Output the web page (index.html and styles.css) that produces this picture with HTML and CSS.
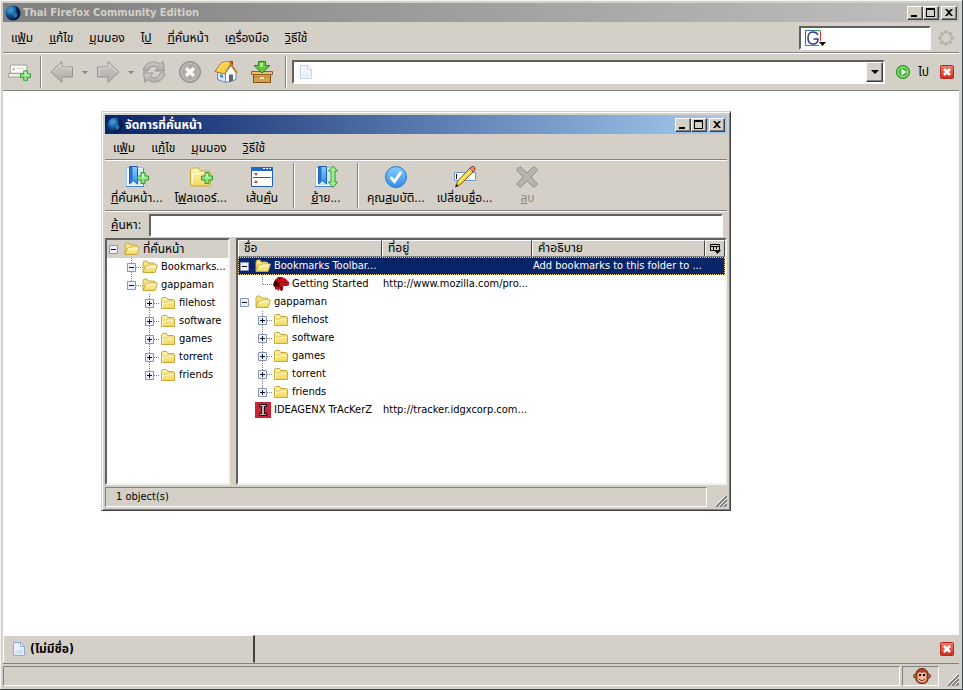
FILE: index.html
```html
<!DOCTYPE html>
<html lang="th">
<head>
  <meta charset="utf-8">
  <title>Thai Firefox Community Edition</title>
  <link rel="stylesheet" href="styles.css">
</head>

<body>
  <!-- shared icons -->
  <svg class="sprite" aria-hidden="true">
    <defs>
      <linearGradient id="g-folder" x1="0" y1="0" x2="0" y2="1"><stop offset="0" stop-color="#fdf6b8"/><stop offset="1" stop-color="#f1d95c"/></linearGradient>
      <linearGradient id="g-blue" x1="0" y1="0" x2="0" y2="1"><stop offset="0" stop-color="#8ccbfa"/><stop offset="1" stop-color="#2f8ee8"/></linearGradient>
      <linearGradient id="g-red" x1="0" y1="0" x2="0" y2="1"><stop offset="0" stop-color="#f08070"/><stop offset="1" stop-color="#cc2a20"/></linearGradient>
      <linearGradient id="g-gray" x1="0" y1="0" x2="0" y2="1"><stop offset="0" stop-color="#cfccc6"/><stop offset="1" stop-color="#aeaba6"/></linearGradient>
      <radialGradient id="g-globe" cx=".35" cy=".3" r=".7"><stop offset="0" stop-color="#58a8dc"/><stop offset=".5" stop-color="#135a9c"/><stop offset="1" stop-color="#04143c"/></radialGradient>

      <symbol id="globe" viewBox="0 0 16 16"><circle cx="8" cy="8" r="7.5" fill="url(#g-globe)"/><path d="M3 4l3-2 2 1-2 2 1 2-3 1-2-1zM8 9l3-1 2 2-2 3-2-1z" fill="#2f8fcf" opacity=".7"/><path d="M10 1c4 1 6 5 5 9-1 3-3 5-6 5 3-2 4-4 3-7s-1-5-2-7z" fill="#020a28" opacity=".6"/></symbol>
      <symbol id="min" viewBox="0 0 12 10"><path d="M2 7h6v2H2z"/></symbol>
      <symbol id="max" viewBox="0 0 12 10"><path d="M1 0h9v9H1zM2 2v6h7V2z" fill-rule="evenodd"/></symbol>
      <symbol id="close" viewBox="0 0 12 10"><path d="M2 1h2l2 2 2-2h2L7 4.500 10 8H8L6 6 4 8H2l3-3.500z"/></symbol>

      <symbol id="folder" viewBox="0 0 16 16"><path d="M1.500 13.500V4l1-1.500h4l1 2h6l1 1v8z" fill="url(#g-folder)" stroke="#c8a83a"/><path d="M2.500 12.500V8h4l1-1h6" fill="none" stroke="#fffde0"/><path d="M3 7h4l1-1h6" fill="none" stroke="#e0c862"/></symbol>
      <symbol id="folder-open" viewBox="0 0 16 16"><path d="M1 13V4l1-2h3l1 2h6l1 1v2" fill="#f7e58a" stroke="#c8a83a"/><path d="M1 13.500l2.500-6.500h3l1-1h8l-2.500 7.500z" fill="url(#g-folder)" stroke="#c8a83a"/><path d="M4 8h3l1-1h6" fill="none" stroke="#fffde0"/></symbol>
      <symbol id="page" viewBox="0 0 12 14"><path d="M.5.5h7l4 4v9H.5z" fill="#e8f1fd" stroke="#8faad4"/><path d="M7.500.5v4h4z" fill="#fff" stroke="#8faad4"/><path d="M2 12V9l8-2v5z" fill="#cfe0f8"/></symbol>
      <symbol id="dino" viewBox="0 0 16 16"><path d="M1 7l1-3 3-3h4l4 2 3 3v3l-2 1h-3l-1 1v3l-2 1-1-2-2 2-1-2-2 1v-3l-2-1z" fill="#c8101c"/><path d="M1 6l2-3v3l2-2v3l3-2-2 4 2 1-3 1-2-1-1 2-1-3H0zM6 1l2 1-2 2zM11 6h2v1h-2zM7 11h2v4H8z" fill="#350406"/></symbol>
      <symbol id="idg" viewBox="0 0 16 16"><path fill="#cc2238" d="M0 0h16v16H0z"/><path d="M4 2h8v3h-2v6h2v3H4v-3h2V5H4z" fill="#111"/><path d="M5 3h6v1H9v8h2v1H5v-1h2V4H5z" fill="#bcb6b8"/></symbol>

      <symbol id="tw-box" viewBox="0 0 9 9"><path d="M.5.5h8v8h-8z" fill="#eef1fb" stroke="#8596bb"/><path d="M2 4h5v1H2z" fill="#111"/></symbol>
      <symbol id="tw-minus" viewBox="0 0 15 18"><use href="#tw-box" y="5" width="9" height="9"/></symbol>
      <symbol id="tw-minus-mid" viewBox="0 0 15 18"><path d="M4.500 0v18M9 9.500h6" class="dots"/><use href="#tw-box" y="5" width="9" height="9"/></symbol>
      <symbol id="tw-minus-end" viewBox="0 0 15 18"><path d="M4.500 0v9M9 9.500h6" class="dots"/><use href="#tw-box" y="5" width="9" height="9"/></symbol>
      <symbol id="tw-plus" viewBox="0 0 15 18"><path d="M4.500 0v18M9 9.500h6" class="dots"/><use href="#tw-box" y="5" width="9" height="9"/><path d="M4 7h1v5H4z" fill="#111"/></symbol>
      <symbol id="tw-plus-end" viewBox="0 0 15 18"><path d="M4.500 0v9M9 9.500h6" class="dots"/><use href="#tw-box" y="5" width="9" height="9"/><path d="M4 7h1v5H4z" fill="#111"/></symbol>
      <symbol id="tw-leaf" viewBox="0 0 15 18"><path d="M4.500 0v9.500H15" class="dots"/></symbol>

      <symbol id="stop-red" viewBox="0 0 14 14"><rect x=".5" y=".5" width="13" height="13" rx="1" fill="url(#g-red)" stroke="#b8281c"/><path d="M4 4l6 6M10 4l-6 6" stroke="#fff" stroke-width="2.500"/></symbol>
      <symbol id="grip" viewBox="0 0 12 12"><path d="M1 12L12 1M5 12l7-7M9 12l3-3" stroke="#808080" stroke-width="2"/><path d="M0 11L11 0M4 11l8-8M8 11l4-4" stroke="#fff"/></symbol>
      <symbol id="plus-green" viewBox="0 0 12 12"><path d="M4 .5h4V4h3.500v4H8v3.500H4V8H.5V4H4z" fill="#8fe080" stroke="#2f9c32"/><path d="M5 2h2v3h3v1H5z" fill="#c8f8b8"/></symbol>
      <symbol id="ribbon" viewBox="0 0 24 24"><path d="M1.500 2.500h17v19h-17z" fill="#f4f9ff" stroke="#a4c4ec"/><path d="M1 21.500h17.500V3" fill="none" stroke="#4a84d0"/><path d="M12 4h5v16H5z" fill="#d3e6fb"/><path d="M4.500 1.500h8V19l-4-3.500-4 3.500z" fill="url(#g-blue)" stroke="#1d5fb4"/><path d="M5 2h2.500v13L5 17z" fill="#2872c8"/></symbol>
    </defs>
  </svg>

  <div class="window main-window">
    <div class="titlebar inactive">
      <svg class="i16"><use href="#globe"/></svg>
      <h1 class="title">Thai Firefox Community Edition</h1>
      <button class="win-btn" aria-label="Minimize"><svg><use href="#min"/></svg></button>
      <button class="win-btn" aria-label="Maximize"><svg><use href="#max"/></svg></button>
      <button class="win-btn win-close" aria-label="Close"><svg><use href="#close"/></svg></button>
    </div>

    <div class="menubar">
      <button class="menu">แ<u>ฟ้</u>ม</button>
      <button class="menu"><u>แ</u>ก้ไข</button>
      <button class="menu"><u>มุ</u>มมอง</button>
      <button class="menu">ไ<u>ป</u></button>
      <button class="menu"><u>ที่</u>คั่นหน้า</button>
      <button class="menu">เ<u>ค</u>รื่องมือ</button>
      <button class="menu"><u>วิ</u>ธีใช้</button>
      <div class="search">
        <svg class="google" viewBox="0 0 22 18"><path fill="#fff" d="M0 1h16v16H0z"/><path d="M.5 17V1.500H10" fill="none" stroke="#3465c8"/><path d="M9 1.500h6.500" stroke="#36a04a"/><path d="M15.500 2v10" stroke="#d03030"/><path d="M0 16.500h14" stroke="#36a04a"/><path d="M13 6c-1-2-3-3-5-3-3 0-5 2-5 6s2 6 5 6c3 0 5-2 5-5H8.500" fill="none" stroke="#27418f" stroke-width="1.500"/><path d="M14 13h7l-3.500 4z"/></svg>
        <input type="text" aria-label="Google">
      </div>
      <svg class="throbber" viewBox="0 0 16 16"><g fill="#b5b2ad"><circle cx="8" cy="2" r="2"/><circle cx="12.200" cy="3.800" r="2"/><circle cx="14" cy="8" r="2"/><circle cx="12.200" cy="12.200" r="2"/><circle cx="8" cy="14" r="2"/><circle cx="3.800" cy="12.200" r="2"/><circle cx="2" cy="8" r="2"/><circle cx="3.800" cy="3.800" r="2"/></g></svg>
    </div>

    <div class="navbar">
      <button class="nav-btn" aria-label="New tab"><svg viewBox="0 0 26 24"><path d="M2.500 13.500v-9h18v9z" fill="#fdfdfb" stroke="#9a9a96"/><path d="M.5 13.500h20v4H.5z" fill="#f0eee8" stroke="#9a9a96"/><path d="M5 8h2v2H5zM9 8h8" stroke="#c8c8c4" fill="#c0c0bc"/><use href="#plus-green" x="13" y="10" width="12" height="12"/></svg></button>
      <span class="sep"></span>
      <button class="nav-btn" aria-label="Back"><svg viewBox="0 0 24 24"><path d="M1 12L12 1.500V7h10.500v10H12v5.500z" fill="url(#g-gray)" stroke="#96938e"/><path d="M3 12l8-8v4h10v3" fill="none" stroke="#dddad4"/></svg></button>
      <button class="drop" aria-label="Back list"></button>
      <button class="nav-btn" aria-label="Forward"><svg viewBox="0 0 24 24"><path d="M23 12L12 1.500V7H1.500v10H12v5.500z" fill="url(#g-gray)" stroke="#96938e"/><path d="M3 16V8h10V4l8 8" fill="none" stroke="#dddad4"/></svg></button>
      <button class="drop" aria-label="Forward list"></button>
      <button class="nav-btn" aria-label="Reload"><svg viewBox="0 0 24 24"><path d="M1.500 11c0-5 4-9 10-9 3 0 5 1 6.500 2.500L21 1.500l1.500 9.500H13l3-3.500C13 5 7 6 6 11z" fill="url(#g-gray)" stroke="#96938e"/><path d="M22.500 13c0 5-4 9-10 9-3 0-5-1-6.500-2.500L3 22.500 1.500 13H11l-3 3.500c3 2.500 9 1.500 10-3.500z" fill="url(#g-gray)" stroke="#96938e"/></svg></button>
      <button class="nav-btn" aria-label="Stop"><svg viewBox="0 0 24 24"><circle cx="12" cy="12" r="10.500" fill="#aeaba7" stroke="#8b8986"/><circle cx="12" cy="12" r="8.500" fill="none" stroke="#c4c1bc"/><path d="M8 8l8 8M16 8l-8 8" stroke="#f7f7f7" stroke-width="3.500"/></svg></button>
      <button class="nav-btn" aria-label="Home"><svg viewBox="0 0 24 24"><path d="M16 1h3v6h-3z" fill="#b03c20"/><path d="M3.500 11v8.500l8 3V13L8 8z" fill="#dbe6f8" stroke="#7088b4"/><path d="M11.500 22.500V13L17 5.500l5 7v7z" fill="#fff" stroke="#7088b4"/><path d="M1 11.500L7.500 2.500 15.500 1.500 17 3.500 10.500 14z" fill="#f9cf48" stroke="#a87414"/><path d="M3 11l5.500-7.500 6-1" fill="none" stroke="#fdec98"/><path d="M16 3l7 10" stroke="#c08820" stroke-width="2"/><path d="M15 14.500h4v6.500l-4 1z" fill="#5c6474"/><path d="M6 14l3 1v3l-3-1z" fill="#5488d4"/></svg></button>
      <button class="nav-btn" aria-label="Downloads"><svg viewBox="0 0 24 24"><path d="M3.500 13.500h17v9h-17z" fill="#d6a050" stroke="#7c5118"/><path d="M1.500 11.500h21v3h-21z" fill="#e9bd72" stroke="#8f6020"/><path d="M4 17h16" stroke="#b87e30"/><path d="M10 17h4v2h-4z" fill="#fbe5b8"/><path d="M8.500 1.500h7v4h4.500l-8 7.500-8-7.500h4.500z" fill="#62c840" stroke="#278418"/><path d="M10 3h3v4h-3z" fill="#a4ee80"/></svg></button>
      <span class="sep sep-url"></span>
      <div class="urlbar">
        <svg class="page"><use href="#page"/></svg>
        <input type="text" aria-label="URL">
        <button class="url-drop" aria-label="History"></button>
      </div>
      <button class="go"><svg viewBox="0 0 14 14"><circle cx="7" cy="7" r="6.500" fill="#3cba2c" stroke="#1f8a1a"/><circle cx="7" cy="7" r="5" fill="none" stroke="#c2f0b4"/><path d="M5.500 3.500L10.500 7l-5 3.500z" fill="#fff"/></svg>ไป</button>
      <button class="nav-close" aria-label="Close"><svg class="i14"><use href="#stop-red"/></svg></button>
    </div>

    <div class="content">
      <div class="window dialog">
        <div class="titlebar active">
          <svg class="i16"><use href="#globe"/></svg>
          <h2 class="title">จัดการที่คั่นหน้า</h2>
          <button class="win-btn" aria-label="Minimize"><svg><use href="#min"/></svg></button>
          <button class="win-btn" aria-label="Maximize"><svg><use href="#max"/></svg></button>
          <button class="win-btn win-close" aria-label="Close"><svg><use href="#close"/></svg></button>
        </div>

        <div class="menubar">
          <button class="menu">แ<u>ฟ้</u>ม</button>
          <button class="menu">แ<u>ก้</u>ไข</button>
          <button class="menu"><u>มุ</u>มมอง</button>
          <button class="menu"><u>วิ</u>ธีใช้</button>
        </div>

        <div class="tools">
          <button class="tool"><svg viewBox="0 0 24 24"><use href="#ribbon" width="24" height="24"/><use href="#plus-green" x="12" y="7" width="12" height="12"/></svg><span><u>ที่</u>คั่นหน้า...</span></button>
          <button class="tool"><svg viewBox="0 0 24 24"><path d="M1.500 19V5l2-2h6l2 3h9l1 1v13l-1 1h-18z" fill="url(#g-folder)" stroke="#c8a83a"/><path d="M3 19l1-10h6l1-1h9" fill="none" stroke="#fffde0"/><use href="#plus-green" x="12" y="7" width="12" height="12"/></svg><span>โ<u>ฟ</u>ลเดอร์...</span></button>
          <button class="tool"><svg viewBox="0 0 24 24"><path d="M1.500 2.500h21v19h-21z" fill="#fff" stroke="#2560b0"/><path d="M1 2h22v4H1z" fill="#2468c4"/><path d="M13 3.500h2m1 0h2m1 0h2" stroke="#fff"/><path d="M3 12.500h18" stroke="#555"/><path d="M4 8h4l-2 3zM4 18h4l-2-3z" fill="#b05030"/></svg><span>เส้น<u>คั่</u>น</span></button>
          <span class="sep"></span>
          <button class="tool"><svg viewBox="0 0 24 24"><use href="#ribbon" width="24" height="24"/><path d="M19 1l4.500 5H21v11h2.500L19 22.500 14.500 17H17V6h-2.500z" fill="#a0ee90" stroke="#2f9c32"/></svg><span><u>ย้</u>าย...</span></button>
          <span class="sep"></span>
          <button class="tool"><svg viewBox="0 0 24 24"><circle cx="12" cy="12" r="10.500" fill="url(#g-blue)" stroke="#2a78cc"/><path d="M6.500 12l4 4.500L17 7" fill="none" stroke="#fff" stroke-width="3"/></svg><span>คุณ<u>ส</u>มบัติ...</span></button>
          <button class="tool"><svg viewBox="0 0 24 24"><path d="M1.500 7.500h21v8h-21z" fill="#fff" stroke="#6c98dc"/><path d="M3 9h1v5H3z"/><path d="M2.500 22l2-6L18 2l3.500 3.500L8 19z" fill="#f4d840" stroke="#806010"/><path d="M17 3l2-1.500h2l1 1.500v2l-2 2z" fill="#e8887c" stroke="#964038"/><path d="M6 17L18.500 4.500" stroke="#fff4a0"/><path d="M2.500 22l1-3 2 2z"/></svg><span>เปลี่ยน<u>ชื่</u>อ...</span></button>
          <button class="tool" disabled><svg viewBox="0 0 24 24"><path d="M1.500 5L5 1.500l7 6.500 7-6.500L22.500 5 16 12l6.500 7-3.500 3.500-7-6.500-7 6.500L1.500 19 8 12z" fill="#b7b4af" stroke="#918e89"/></svg><span><u>ล</u>บ</span></button>
        </div>

        <div class="find">
          <label for="find"><u>ค้</u>นหา:</label>
          <input type="text" id="find">
        </div>

        <div class="panes">
          <ul class="tree folders">
            <li class="row current"><svg class="tw"><use href="#tw-minus"/></svg><svg class="i16"><use href="#folder-open"/></svg>ที่คั่นหน้า</li>
            <li class="row l1"><svg class="tw"><use href="#tw-minus-mid"/></svg><svg class="i16"><use href="#folder-open"/></svg>Bookmarks...</li>
            <li class="row l1"><svg class="tw"><use href="#tw-minus-end"/></svg><svg class="i16"><use href="#folder-open"/></svg>gappaman</li>
            <li class="row l2"><svg class="tw"><use href="#tw-plus"/></svg><svg class="i16"><use href="#folder"/></svg>filehost</li>
            <li class="row l2"><svg class="tw"><use href="#tw-plus"/></svg><svg class="i16"><use href="#folder"/></svg>software</li>
            <li class="row l2"><svg class="tw"><use href="#tw-plus"/></svg><svg class="i16"><use href="#folder"/></svg>games</li>
            <li class="row l2"><svg class="tw"><use href="#tw-plus"/></svg><svg class="i16"><use href="#folder"/></svg>torrent</li>
            <li class="row l2"><svg class="tw"><use href="#tw-plus-end"/></svg><svg class="i16"><use href="#folder"/></svg>friends</li>
          </ul>
          <div class="tree list">
            <table>
              <colgroup><col class="c-name"><col class="c-url"><col><col class="c-pick"></colgroup>
              <thead>
                <tr><th>ชื่อ</th><th>ที่อยู่</th><th>คำอธิบาย</th><th class="pick"><button aria-label="Columns"><svg viewBox="0 0 12 11"><path d="M1.500 1.500h9v6h-9zM1 3.500h10M4.500 3v5M7.500 3v3" fill="none" stroke="#000"/><path d="M5 7h7l-3.500 4z"/></svg></button></th></tr>
              </thead>
              <tbody>
                <tr class="selected"><td><div class="row"><svg class="tw"><use href="#tw-minus"/></svg><svg class="i16"><use href="#folder-open"/></svg>Bookmarks Toolbar...</div></td><td></td><td colspan="2">Add bookmarks to this folder to ...</td></tr>
                <tr><td><div class="row l1"><svg class="tw"><use href="#tw-leaf"/></svg><svg class="i16"><use href="#dino"/></svg>Getting Started</div></td><td>http://www.mozilla.com/pro...</td><td colspan="2"></td></tr>
                <tr><td><div class="row"><svg class="tw"><use href="#tw-minus"/></svg><svg class="i16"><use href="#folder-open"/></svg>gappaman</div></td><td></td><td colspan="2"></td></tr>
                <tr><td><div class="row l1"><svg class="tw"><use href="#tw-plus"/></svg><svg class="i16"><use href="#folder"/></svg>filehost</div></td><td></td><td colspan="2"></td></tr>
                <tr><td><div class="row l1"><svg class="tw"><use href="#tw-plus"/></svg><svg class="i16"><use href="#folder"/></svg>software</div></td><td></td><td colspan="2"></td></tr>
                <tr><td><div class="row l1"><svg class="tw"><use href="#tw-plus"/></svg><svg class="i16"><use href="#folder"/></svg>games</div></td><td></td><td colspan="2"></td></tr>
                <tr><td><div class="row l1"><svg class="tw"><use href="#tw-plus"/></svg><svg class="i16"><use href="#folder"/></svg>torrent</div></td><td></td><td colspan="2"></td></tr>
                <tr><td><div class="row l1"><svg class="tw"><use href="#tw-plus-end"/></svg><svg class="i16"><use href="#folder"/></svg>friends</div></td><td></td><td colspan="2"></td></tr>
                <tr><td><div class="row"><svg class="tw"></svg><svg class="i16"><use href="#idg"/></svg>IDEAGENX TrAcKerZ</div></td><td>http://tracker.idgxcorp.com...</td><td colspan="2"></td></tr>
              </tbody>
            </table>
          </div>
        </div>

        <div class="statusbar">
          <div class="panel">1 object(s)</div>
          <svg class="grip"><use href="#grip"/></svg>
        </div>
      </div>
    </div>

    <div class="tabbar">
      <button class="tab"><svg class="page"><use href="#page"/></svg>(ไม่มีชื่อ)</button>
      <button class="nav-close" aria-label="Close tab"><svg class="i14"><use href="#stop-red"/></svg></button>
    </div>

    <div class="statusbar">
      <div class="panel"></div>
      <div class="panel monkey"><svg viewBox="0 0 18 16"><circle cx="2.500" cy="8" r="2" fill="#d88868" stroke="#6c2818"/><circle cx="15.500" cy="8" r="2" fill="#d88868" stroke="#6c2818"/><path d="M3 7c0-4 2-6.500 6-6.500S15 3 15 7v4c0 3-3 4.500-6 4.500S3 14 3 11z" fill="#a84428" stroke="#6c2818"/><path d="M4.500 6c1-2 3-2 4.500-1 1.500-1 3.500-1 4.500 1v5c0 2-2 3.500-4.500 3.500S4.500 13 4.500 11z" fill="#f3b896"/><path d="M6 6h2v2H6zM10 6h2v2h-2z"/><path d="M6 11c2 2 4 2 6 0" fill="none" stroke="#5c1c10"/></svg></div>
      <svg class="grip"><use href="#grip"/></svg>
    </div>
  </div>
</body>
</html>
```

FILE: styles.css
```css
* {
  box-sizing: border-box;
}

body {
  margin: 0;
  font-family: Tahoma, "DejaVu Sans Condensed", "Noto Sans Thai", sans-serif;
  font-size: 11px;
  line-height: 18px;
  color: #000;
}

button,
input {
  font: inherit;
  color: inherit;
  border: 0;
  padding: 0;
  margin: 0;
  background: none;
}

button {
  white-space: nowrap;
}

svg {
  display: block;
  flex: none;
}

.sprite {
  position: absolute;
  width: 0;
  height: 0;
}

.dots {
  fill: none;
  stroke: #808080;
  stroke-dasharray: 1 1;
}

.i16 {
  width: 16px;
  height: 16px;
}

.i14 {
  width: 14px;
  height: 14px;
}

.page {
  width: 12px;
  height: 14px;
}

/* thai labels need a slightly larger size */
.menu,
.tool,
.go,
.tab,
.find,
.current,
.dialog .title,
th {
  font-size: 12px;
}

/* windows */
.window {
  display: flex;
  flex-direction: column;
  background: #d4d0c8;
}

.main-window {
  min-height: 100vh;
  padding: 3px;
  border-right: 1px solid #404850;
  border-bottom: 1px solid #404850;
  box-shadow: inset 1px 1px #f4f4f2;
}

.titlebar {
  display: flex;
  align-items: center;
  height: 19px;
  padding: 0 2px;
  color: #fff;
}

.inactive {
  background: linear-gradient(to right, #808080, #c0c0c0);
  color: #d4d0c8;
}

.active {
  background: linear-gradient(to right, #0a246a, #a6caf0);
}

.title {
  flex: 1;
  margin: 0 0 0 2px;
  font-size: 11px;
  font-weight: bold;
}

.win-btn {
  display: flex;
  align-items: center;
  justify-content: center;
  width: 16px;
  height: 14px;
  background: #d4d0c8;
  border: 1px solid;
  border-color: #fff #404040 #404040 #fff;
  box-shadow: inset -1px -1px #808080;
}

.win-btn svg {
  width: 12px;
  height: 10px;
}

.win-close {
  margin-left: 2px;
}

.menubar {
  display: flex;
  align-items: center;
  height: 31px;
  padding: 2px 5px 0 0;
  border-bottom: 1px solid #808080;
}

.menu {
  padding: 0 8px;
}

.search {
  display: flex;
  align-items: center;
  width: 132px;
  height: 24px;
  margin-left: auto;
  padding-left: 4px;
  background: #fff;
  border: 2px solid;
  border-color: #606060 #fff #fff #606060;
}

.google {
  width: 22px;
  height: 18px;
}

.search input {
  flex: 1;
  min-width: 0;
}

.throbber {
  width: 16px;
  height: 16px;
  margin-left: 7px;
}

.navbar {
  display: flex;
  align-items: center;
  height: 38px;
  padding: 0 5px;
  border-top: 1px solid #fff;
  border-bottom: 1px solid #808080;
}

.nav-btn {
  padding: 0 6px;
}

.nav-btn svg {
  width: 24px;
  height: 24px;
}

.nav-btn:first-child {
  padding: 0 6px 0 0;
}

.sep {
  align-self: stretch;
  width: 2px;
  margin: 2px;
  border-left: 1px solid #808080;
  border-right: 1px solid #fff;
}

.drop::before,
.url-drop::before {
  content: "";
  display: block;
  border: 3px solid transparent;
  border-top-color: #808080;
  border-bottom: 0;
}

.drop {
  margin: 0 2px;
}

.sep-url {
  margin: 2px 5px;
}

.urlbar {
  display: flex;
  align-items: center;
  flex: 1;
  height: 24px;
  padding-left: 6px;
  background: #fff;
  border: 2px solid;
  border-color: #606060 #fff #fff #606060;
}

.urlbar input {
  flex: 1;
  min-width: 0;
}

.urlbar .page {
  opacity: 0.5;
}

.url-drop {
  display: flex;
  align-items: center;
  justify-content: center;
  align-self: stretch;
  width: 17px;
  background: #d4d0c8;
  border: 1px solid;
  border-color: #fff #404040 #404040 #fff;
  box-shadow: inset -1px -1px #808080;
}

.url-drop::before {
  border-width: 4px 4px 0;
  border-top-color: #000;
}

.go {
  display: flex;
  align-items: center;
  gap: 8px;
  margin: 0 11px;
}

.go svg {
  width: 14px;
  height: 14px;
}

.content {
  flex: 1;
  position: relative;
  min-height: 440px;
  background: #fff;
}

/* bookmarks manager */
.dialog {
  position: absolute;
  top: 20px;
  left: 98px;
  right: 228px;
  padding: 3px;
  border: 1px solid;
  border-color: #d4d0c8 #404040 #404040 #d4d0c8;
  box-shadow: inset 1px 1px #fff, inset -1px -1px #808080;
}

.dialog .menubar {
  height: 26px;
}

.tools {
  display: flex;
  height: 51px;
  border-top: 1px solid #fff;
  border-bottom: 1px solid #808080;
}

.tool {
  display: flex;
  flex-direction: column;
  align-items: center;
  min-width: 58px;
  padding: 4px 6px 0;
}

.tool svg {
  width: 24px;
  height: 24px;
}

.tool:disabled {
  color: #8c8984;
}

.find {
  display: flex;
  align-items: center;
  gap: 8px;
  height: 27px;
  padding: 0 4px 0 6px;
  border-top: 1px solid #fff;
}

.find input {
  flex: 1;
  height: 23px;
  background: #fff;
  border: 2px solid;
  border-color: #606060 #fff #fff #606060;
}

.panes {
  display: flex;
  gap: 6px;
}

.tree {
  min-height: 247px;
  margin: 0;
  padding: 0;
  background: #fff;
  border: 2px solid;
  border-color: #606060 #f4f2ee #f4f2ee #606060;
  list-style: none;
}

.folders {
  width: 125px;
}

.list {
  flex: 1;
}

.row {
  display: flex;
  height: 18px;
  padding-left: 2px;
  white-space: nowrap;
}

.row .i16 {
  margin: 1px 3px 0 0;
}

.tw {
  width: 15px;
  height: 18px;
}

.current {
  background: #d4d0c8;
}

.l1 {
  padding-left: 20px;
}

.l2 {
  padding-left: 38px;
}

table {
  width: 100%;
  table-layout: fixed;
  border-collapse: separate;
  border-spacing: 0;
}

.c-name {
  width: 144px;
}

.c-url {
  width: 150px;
}

.c-pick {
  width: 20px;
}

th {
  height: 17px;
  padding: 0 5px;
  font-weight: normal;
  line-height: 15px;
  text-align: left;
  background: #d4d0c8;
  border: 1px solid;
  border-color: #fff #404040 #808080 #fff;
}

.pick {
  padding: 0 3px;
}

.pick button {
  display: block;
}

.pick svg {
  width: 12px;
  height: 11px;
}

td {
  height: 18px;
  padding: 0 1px;
  white-space: nowrap;
}

td:first-child {
  padding: 0;
}

.selected {
  color: #fff;
  background: #0a246a;
  outline: 1px dotted #f5db95;
  outline-offset: -1px;
}

.tabbar {
  display: flex;
  align-items: center;
  justify-content: space-between;
  height: 29px;
  padding-right: 5px;
  border-bottom: 1px solid #808080;
}

.tab {
  display: flex;
  align-items: center;
  gap: 5px;
  width: 252px;
  height: 28px;
  padding-left: 9px;
  font-weight: bold;
  border: 1px solid;
  border-color: #fff #404040 transparent #fff;
  border-right-width: 2px;
}

.statusbar {
  display: flex;
  align-items: flex-end;
  gap: 2px;
  padding-top: 2px;
}

.panel {
  flex: 1;
  height: 20px;
  padding-left: 10px;
  border: 1px solid;
  border-color: #808080 #fff #fff #808080;
}

.monkey {
  flex: none;
  width: 37px;
}

.monkey svg {
  width: 18px;
  height: 16px;
  margin-top: 1px;
}

.grip {
  width: 12px;
  height: 12px;
  margin-left: 6px;
}
```
